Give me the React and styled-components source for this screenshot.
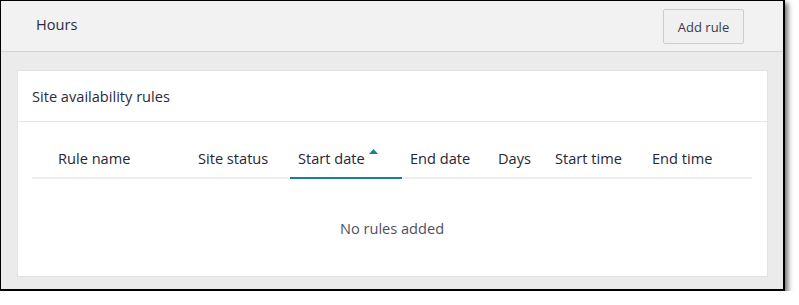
import React from "react";
import styled, { createGlobalStyle } from "styled-components";

const GlobalStyle = createGlobalStyle`
  body {
    margin: 0;
    background: #ffffff;
    font-family: "Open Sans", "Noto Sans", sans-serif;
  }
`;

const columns = [
  { label: "Rule name", width: 158, first: true },
  { label: "Site status", width: 100 },
  { label: "Start date", width: 112, active: true },
  { label: "End date", width: 88 },
  { label: "Days", width: 57 },
  { label: "Start time", width: 97 },
  { label: "End time", width: 108 },
];

const App = () => {
  return (
    <>
      <GlobalStyle />
      <Frame>
        <Header>
          <Title>Hours</Title>
          <Button>Add rule</Button>
        </Header>
        <Body>
          <Card>
            <CardTitle>Site availability rules</CardTitle>
            <Table>
              <HeadRow>
                {columns.map((c) => (
                  <HeadCell
                    key={c.label}
                    $width={c.width}
                    $first={c.first}
                    $active={c.active}
                  >
                    {c.label}
                    {c.active && (
                      <SortIcon width="9" height="5" viewBox="0 0 9 5">
                        <path d="M0 5 L4.5 0 L9 5 Z" fill="#1a7e98" />
                      </SortIcon>
                    )}
                  </HeadCell>
                ))}
              </HeadRow>
              <Empty>No rules added</Empty>
            </Table>
          </Card>
        </Body>
      </Frame>
    </>
  );
};

export default App;

const Frame = styled.div`
  width: 782px;
  border-top: 1px solid #000;
  border-left: 1px solid #000;
  border-right: 2px solid #000;
  border-bottom: 2px solid #000;
  box-shadow: 3px 3px 5px rgba(0, 0, 0, 0.55);
  background: #ebebeb;
  color: #2b2b3d;
`;

const Header = styled.div`
  height: 50px;
  display: flex;
  align-items: center;
  justify-content: space-between;
  padding: 0 39px 0 35px;
  background: #f2f2f2;
  border-bottom: 1px solid #d4d4d4;
`;

const Title = styled.h1`
  margin: 0 0 5px;
  font-size: 14.6px;
  font-weight: 400;
  color: #2b2b45;
`;

const Button = styled.button`
  width: 81px;
  height: 35px;
  margin-top: 1px;
  border: 1px solid #cccccc;
  border-radius: 2px;
  background: #f0f0f0;
  font-family: "Open Sans", sans-serif;
  font-size: 13px;
  color: #3a3a4a;
  padding: 0;
`;

const Body = styled.div`
  padding: 18px 15px 12px 16px;
`;

const Card = styled.div`
  background: #ffffff;
  border: 1px solid #e2e2e2;
  height: 207px;
  box-sizing: border-box;
`;

const CardTitle = styled.h2`
  margin: 0;
  height: 50px;
  display: flex;
  align-items: center;
  padding-left: 14px;
  font-size: 14.6px;
  font-weight: 400;
  border-bottom: 1px solid #e6e6e6;
`;

const Table = styled.div`
  margin: 0 15px 0 14px;
`;

const HeadRow = styled.div`
  display: flex;
  padding-top: 26px;
  border-bottom: 2px solid #eeeeee;
`;

const HeadCell = styled.div`
  position: relative;
  width: ${(p) => p.$width}px;
  box-sizing: border-box;
  padding: 0 0 9px ${(p) => (p.$first ? 26 : 8)}px;
  font-size: 14.6px;
  color: #262636;
  white-space: nowrap;
  margin-bottom: -2px;
  border-bottom: 2px solid ${(p) => (p.$active ? "#1a7e98" : "transparent")};
`;

const SortIcon = styled.svg`
  position: absolute;
  left: 79px;
  top: 1px;
`;

const Empty = styled.div`
  text-align: center;
  font-size: 14.6px;
  color: #505060;
  padding-top: 39px;
`;
